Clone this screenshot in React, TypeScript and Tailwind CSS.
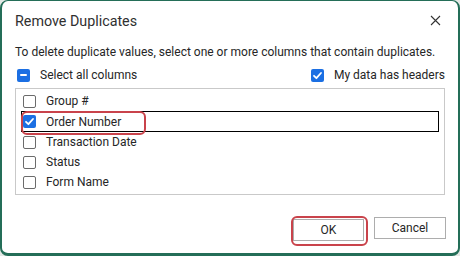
import React from "react";

function Box({ state }: { state: "on" | "off" | "mixed" }) {
  if (state === "off") {
    return <span className="block w-[13px] h-[13px] rounded-[2px] border border-[#6b6b6b] bg-white shrink-0" />;
  }
  return (
    <span className="flex w-[13px] h-[13px] rounded-[2px] bg-[#1b6fe3] items-center justify-center shrink-0">
      {state === "on" ? (
        <svg width="11" height="11" viewBox="0 0 11 11">
          <path d="M2 5.8 L4.4 8.2 L9 3" fill="none" stroke="white" strokeWidth="1.8" strokeLinecap="round" strokeLinejoin="round" />
        </svg>
      ) : (
        <span className="block w-[7px] h-[2px] bg-white rounded-[1px]" />
      )}
    </span>
  );
}

const rows = ["Group #", "Order Number", "Transaction Date", "Status", "Form Name"];

export default function App() {
  return (
    <div className="w-[460px] h-[256px] bg-[#e3e8e5] text-[#262626] font-[Roboto,sans-serif]">
      <div className="w-[460px] h-[256px] bg-white rounded-[8px] border-x-2 border-b-[3px] border-t border-[#246e58] flex flex-col">
        <div className="h-[41px] flex items-start justify-between pl-[13px] pr-[17px]">
          <div className="pt-[10px] text-[14.3px] leading-[20px] text-[#303030]">Remove Duplicates</div>
          <svg className="mt-[14px]" width="11" height="11" viewBox="0 0 11 11">
            <path d="M1 1 L10 10 M10 1 L1 10" stroke="#333" strokeWidth="1.1" />
          </svg>
        </div>
        <div className="h-[20px] pl-[13px] text-[12px] leading-[20px] whitespace-nowrap">
          To delete duplicate values, select one or more columns that contain duplicates.
        </div>
        <div className="mt-[3px] h-[20px] flex items-center pl-[15px] pr-[13px] text-[12px]">
          <Box state="mixed" />
          <span className="ml-[10px]">Select all columns</span>
          <span className="flex-1" />
          <Box state="on" />
          <span className="ml-[10px]">My data has headers</span>
        </div>
        <div className="mt-[3px] mx-[13px] h-[107px] border border-[#c9c9c9] pt-[2px] pl-[5px] pr-[5px]">
          {rows.map((r, i) => (
            <div
              key={r}
              className={
                i === 1
                  ? "relative h-[21px] flex items-center pl-[1px] text-[12px] border border-black"
                  : "relative h-[20px] flex items-center pl-[2px] text-[12px]"
              }
            >
              <Box state={i === 1 ? "on" : "off"} />
              <span className="ml-[10px]">{r}</span>
              {i === 1 && (
                <span className="absolute -left-px -top-px w-[125px] h-[24px] border-2 border-[#c9434b] rounded-[6px]" />
              )}
            </div>
          ))}
        </div>
        <div className="mt-[22px] flex justify-end gap-[10px] pr-[12px]">
          <div className="relative">
            <button className="w-[71px] h-[22px] border border-[#adadad] bg-white text-[12px] leading-[20px]">OK</button>
            <span className="absolute -left-[2px] -top-[1px] w-[77px] h-[30px] border-2 border-[#c9434b] rounded-[6px]" />
          </div>
          <button className="w-[72px] h-[22px] border border-[#adadad] bg-white text-[12px] leading-[20px]">Cancel</button>
        </div>
      </div>
    </div>
  );
}
